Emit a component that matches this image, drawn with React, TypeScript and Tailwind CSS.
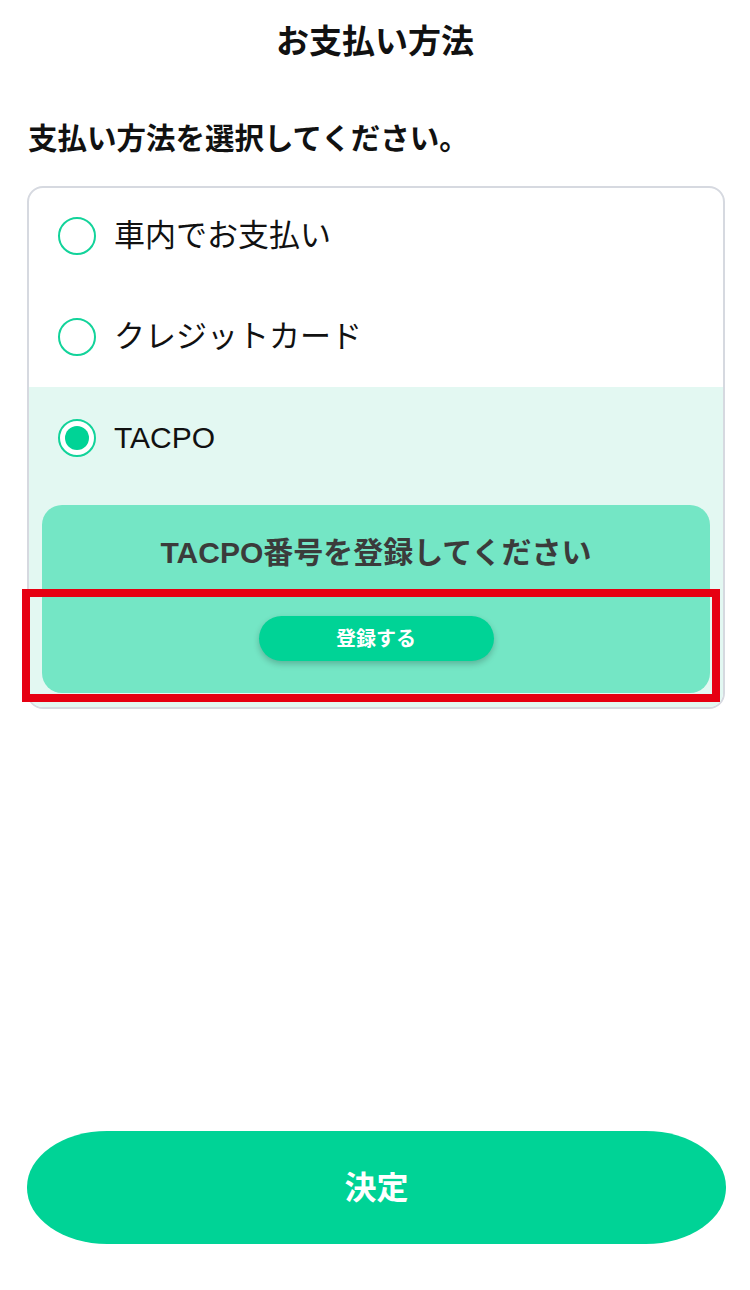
import React from "react";

const font = "font-['Liberation_Sans','Noto_Sans_CJK_JP',sans-serif]";

function Radio({ checked }: { checked?: boolean }) {
  return (
    <span className="w-[38px] h-[38px] shrink-0 rounded-full border-[2.5px] border-[#12d39a] bg-white flex items-center justify-center">
      {checked && <span className="w-[24px] h-[24px] rounded-full bg-[#00d396]" />}
    </span>
  );
}

export default function App() {
  return (
    <div className={`${font} w-[750px] h-[1290px] bg-white flex flex-col relative text-[#111]`}>
      <h1 className="text-center text-[33px] font-bold leading-[48px] pt-[18px]">お支払い方法</h1>
      <p className="mt-[53px] px-[28px] text-[29.5px] font-bold leading-[40px]">支払い方法を選択してください。</p>

      <div className="mt-[27px] ml-[27px] mr-[25px] border-2 border-[#d6d9e0] rounded-[16px] overflow-hidden">
        <div className="h-[96px] flex items-center pl-[29px] gap-[18px]">
          <Radio />
          <span className="text-[31px] leading-[40px]">車内でお支払い</span>
        </div>
        <div className="h-[103px] pt-[3px] flex items-center pl-[29px] gap-[18px]">
          <Radio />
          <span className="text-[31px] leading-[40px]">クレジットカード</span>
        </div>
        <div className="bg-[#e3f8f2] pb-[14px]">
          <div className="h-[102px] flex items-center pl-[29px] gap-[18px]">
            <Radio checked />
            <span className="text-[30px] leading-[40px]">TACPO</span>
          </div>
          <div className="mt-[16px] mx-[13px] bg-[#74e6c5] rounded-[20px] pt-[28px] pb-[32px] flex flex-col items-center">
            <p className="text-[30px] font-bold leading-[40px] text-[#3b3b3b]">TACPO番号を登録してください</p>
            <button className="mt-[43px] w-[235px] h-[45px] rounded-full bg-[#00d396] text-white text-[20px] font-bold shadow-[0_3px_6px_rgba(0,0,0,0.22)]">
              登録する
            </button>
          </div>
        </div>
      </div>

      <button className="mt-auto mb-[46px] ml-[27px] mr-[24px] h-[113px] rounded-[80px/56px] bg-[#00d396] text-white text-[32px] font-bold">
        決定
      </button>

      <div className="absolute left-[22px] top-[589px] w-[698px] h-[113px] border-[8px] border-[#e60012] pointer-events-none" />
    </div>
  );
}
